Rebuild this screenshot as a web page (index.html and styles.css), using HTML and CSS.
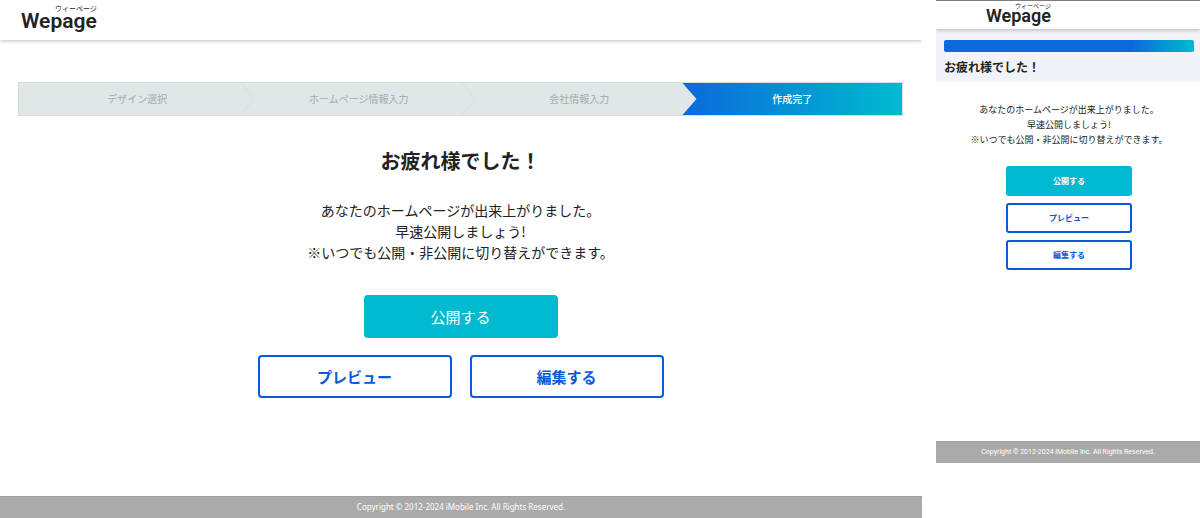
FILE: index.html
```
<!DOCTYPE html>
<html lang="ja">
<head>
<meta charset="utf-8">
<title>Wepage</title>
<link rel="stylesheet" href="styles.css">
</head>
<body>
<div class="screens">
  <section class="desktop">
    <header class="bar">
      <a class="logo" href="#">Wepage<span class="logo-kana">ウィーページ</span></a>
    </header>
    <main class="desktop-main">
      <ol class="steps">
        <li class="step">デザイン選択<svg class="chevron" viewBox="0 0 14 34" aria-hidden="true"><path d="M0 1L13 17L0 33"/></svg></li>
        <li class="step">ホームページ情報入力<svg class="chevron" viewBox="0 0 14 34" aria-hidden="true"><path d="M0 1L13 17L0 33"/></svg></li>
        <li class="step">会社情報入力</li>
        <li class="step step-current" aria-current="step">作成完了</li>
      </ol>
      <h1 class="title">お疲れ様でした！</h1>
      <p class="message">あなたのホームページが出来上がりました。<br>早速公開しましょう!<br>※いつでも公開・非公開に切り替えができます。</p>
      <div class="actions">
        <button class="button button-primary" type="button">公開する</button>
        <div class="action-row">
          <button class="button" type="button">プレビュー</button>
          <button class="button" type="button">編集する</button>
        </div>
      </div>
    </main>
    <footer class="footer">Copyright © 2012-2024 iMobile Inc. All Rights Reserved.</footer>
  </section>
  <section class="mobile">
    <header class="bar">
      <a class="logo" href="#">Wepage<span class="logo-kana">ウィーページ</span></a>
    </header>
    <div class="progress">
      <div class="progress-bar"></div>
      <h2 class="title">お疲れ様でした！</h2>
    </div>
    <main class="mobile-main">
      <p class="message">あなたのホームページが出来上がりました。<br>早速公開しましょう!<br>※いつでも公開・非公開に切り替えができます。</p>
      <div class="actions">
        <button class="button button-primary" type="button">公開する</button>
        <button class="button" type="button">プレビュー</button>
        <button class="button" type="button">編集する</button>
      </div>
    </main>
    <footer class="footer">Copyright © 2012-2024 iMobile Inc. All Rights Reserved.</footer>
  </section>
</div>
</body>
</html>
```
FILE: styles.css
```
* { box-sizing: border-box; }
body {
  margin: 0;
  background: #fff;
  color: #222;
  font-family: "Noto Sans CJK JP", sans-serif;
}
h1, h2, p, ol { margin: 0; padding: 0; }
.screens {
  display: grid;
  grid-template-columns: 922fr 264fr;
  column-gap: 14px;
  min-height: 100vh;
}
.desktop, .mobile { overflow: hidden; }
.desktop { display: flex; flex-direction: column; }

.bar {
  position: relative;
  display: flex;
  align-items: center;
  height: 40px;
  padding-left: 21px;
  box-shadow: 0 1px 4px rgba(0, 0, 0, .25);
}
.logo {
  position: relative;
  padding-top: 2px;
  color: #222;
  font-family: Roboto, sans-serif;
  font-size: 21px;
  font-weight: 600;
  line-height: 24px;
  text-decoration: none;
}
.logo-kana {
  position: absolute;
  top: -3px;
  right: 0;
  font-family: "Noto Sans CJK JP", sans-serif;
  font-size: 7px;
  font-weight: 400;
  line-height: 8px;
  white-space: nowrap;
}

.desktop-main { flex: 1; padding: 42px 19px 40px 18px; }
.steps {
  display: grid;
  grid-template-columns: 223fr 221fr 221fr 220fr;
  height: 34px;
  border: 1px solid #d8dedf;
  background: #dfe7e8;
  list-style: none;
}
.step {
  position: relative;
  display: flex;
  align-items: center;
  justify-content: center;
  padding-left: 14px;
  color: #a1acad;
  font-size: 10px;
  line-height: 16px;
}
.chevron {
  position: absolute;
  top: -1px;
  right: -14px;
  width: 14px;
  height: 34px;
  fill: none;
  stroke: #d6dfe0;
}
.step-current {
  padding-left: 0;
  background: linear-gradient(90deg, #0b69dc, #00bbcf);
  color: #fff;
  font-weight: 500;
  clip-path: polygon(0 0, 100% 0, 100% 100%, 0 100%, 14px 50%);
}
.desktop .title {
  margin-top: 30px;
  font-size: 20px;
  line-height: 30px;
  text-align: center;
}
.message { text-align: center; }
.desktop .message {
  margin-top: 24px;
  font-size: 14px;
  line-height: 21px;
}
.actions { display: flex; flex-direction: column; align-items: center; }
.desktop .actions { margin-top: 32px; gap: 17px; }
.action-row { display: flex; gap: 18px; }
.button {
  width: 194px;
  height: 43px;
  padding: 0;
  border: 2px solid #075bd8;
  border-radius: 4px;
  background: #fff;
  color: #075bd8;
  font: 700 15px/20px "Noto Sans CJK JP", sans-serif;
}
.button-primary {
  border-color: #00bbcf;
  background: #00bbcf;
  color: #fff;
  font-weight: 400;
}
.footer {
  height: 22px;
  background: #aaa;
  color: #fff;
  text-align: center;
  line-height: 20px;
  border-top: 1px solid #a0a0a0;
}
.desktop .footer { font-family: "Noto Sans", sans-serif; font-size: 8px; }

.mobile .bar {
  height: 29px;
  padding-left: 50px;
  border-top: 1px solid #7b7f84;
}
.mobile .logo { font-size: 18px; line-height: 20px; }
.mobile .logo-kana { top: -1px; font-size: 6px; line-height: 6px; }
.progress { padding: 11px 6px 5px 8px; background: #f0f4f8; }
.progress-bar {
  height: 12px;
  border-radius: 2px;
  background: linear-gradient(90deg, #0b69dc 75%, #00bbcf);
}
.mobile .title {
  margin-top: 4px;
  font-size: 12px;
  line-height: 21px;
}
.mobile-main { padding: 20px 0 171px 2px; }
.mobile .message { font-size: 9px; line-height: 15px; }
.mobile .actions { margin-top: 19px; gap: 7px; }
.mobile .button {
  width: 126px;
  height: 30px;
  border-radius: 3px;
  font-size: 8px;
  line-height: 12px;
}
.mobile .button-primary { font-weight: 700; }
.mobile .footer { font-family: Roboto, sans-serif; font-size: 7px; }
```
